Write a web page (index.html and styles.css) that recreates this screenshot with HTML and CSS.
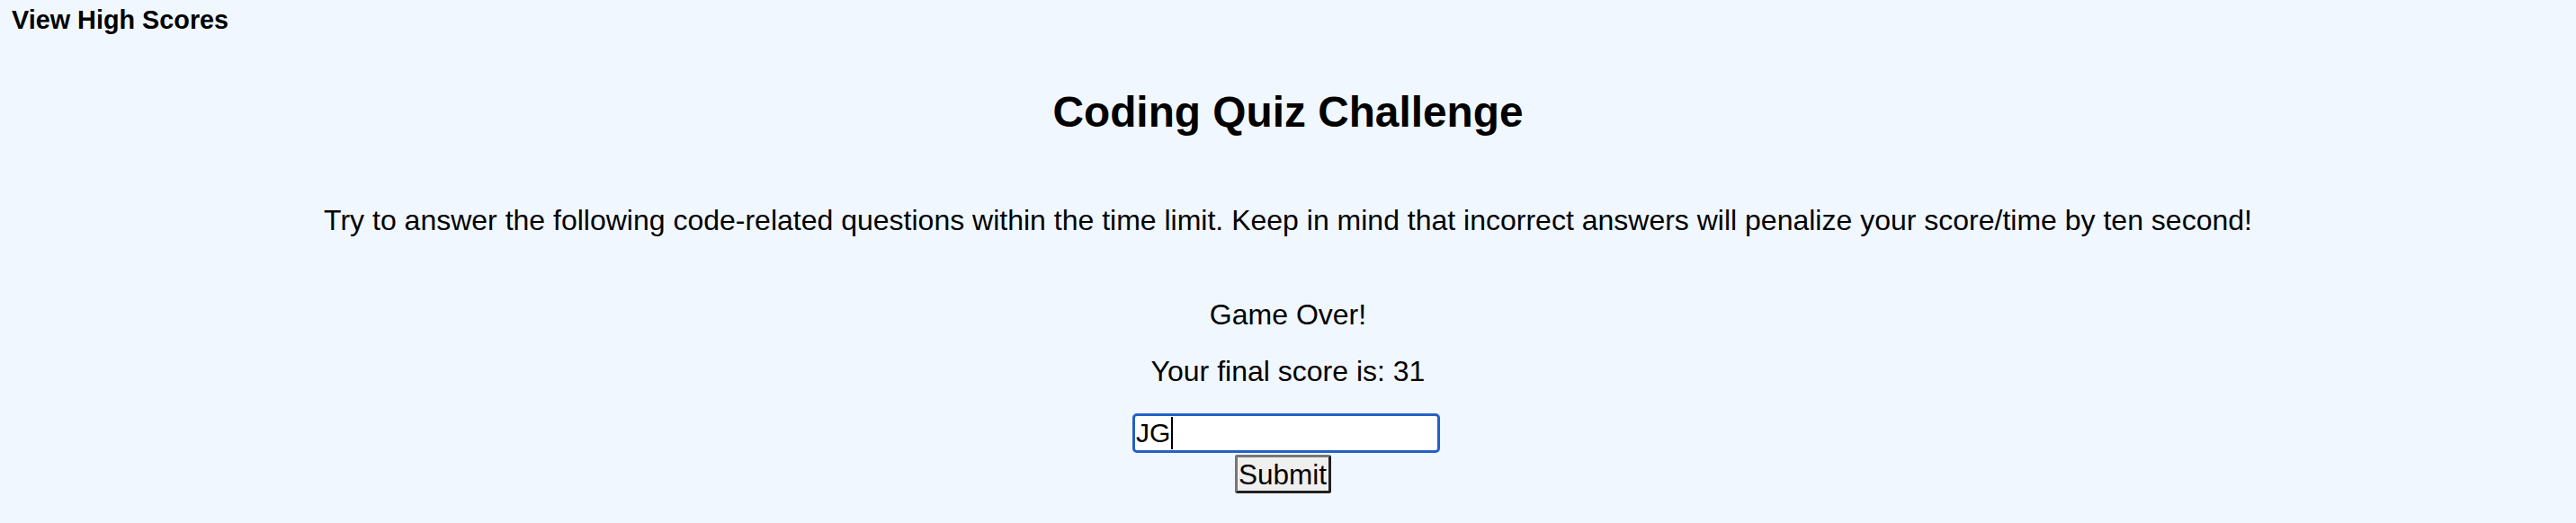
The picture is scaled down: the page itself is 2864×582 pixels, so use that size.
FILE: index.html
```html
<!DOCTYPE html>
<html lang="en">
<head>
<meta charset="utf-8">
<title>Coding Quiz Challenge</title>
<link rel="stylesheet" href="styles.css">
</head>
<body>
<header class="top-bar">
  <a class="scores-link" href="#">View High Scores</a>
</header>
<main class="quiz">
  <h2 class="quiz-title">Coding Quiz Challenge</h2>
  <p class="quiz-intro">Try to answer the following code-related questions within the time limit. Keep in mind that incorrect answers will penalize your score/time by ten second!</p>
  <p class="game-over">Game Over!</p>
  <p class="final-score">Your final score is: 31</p>
  <form class="score-form">
    <span class="field">
      <input class="initials" type="text" value="JG">
      <span class="caret"></span>
    </span>
    <button class="submit-btn" type="button">Submit</button>
  </form>
</main>
</body>
</html>
```

FILE: styles.css
```css
html, body {
  margin: 0;
  padding: 0;
}

body {
  background: #f0f7ff;
  color: #000;
  font-family: "Liberation Sans", Arial, Helvetica, sans-serif;
  width: 2864px;
  height: 582px;
  overflow: hidden;
}

.top-bar {
  padding: 6px 0 0 13px;
  height: 33px;
}

.scores-link {
  font-size: 28.8px;
  line-height: 33px;
  font-weight: bold;
  color: #000;
  text-decoration: none;
}

.quiz {
  display: flex;
  flex-direction: column;
  align-items: center;
  text-align: center;
}

.quiz-title {
  margin: 58px 0 0;
  font-size: 47.8px;
  line-height: 56px;
  font-weight: bold;
}

.quiz-intro,
.game-over,
.final-score {
  font-size: 32px;
  line-height: 36px;
  margin: 0;
}

.quiz-intro {
  margin-top: 74px;
}

.game-over {
  margin-top: 69px;
}

.final-score {
  margin-top: 27px;
}

.score-form {
  margin-top: 29px;
  display: flex;
  flex-direction: column;
  align-items: center;
}

.field {
  position: relative;
  display: block;
  margin-right: 4px;
}

.initials {
  display: block;
  box-sizing: border-box;
  width: 342px;
  height: 44px;
  margin: 0;
  padding: 0 1px 0 1px;
  border: 3px solid #2460c8;
  border-radius: 5px;
  background: #fff;
  font-family: "Liberation Sans", Arial, Helvetica, sans-serif;
  font-size: 30px;
  color: #000;
  outline: none;
}

.caret {
  position: absolute;
  left: 43px;
  top: 4px;
  width: 2px;
  height: 36px;
  background: #000;
}

.submit-btn {
  box-sizing: border-box;
  margin: 2px 12px 0 0;
  width: 107px;
  height: 43px;
  padding: 0;
  background: #efefef;
  color: #000;
  font-family: "Liberation Sans", Arial, Helvetica, sans-serif;
  font-size: 31.5px;
  line-height: 36px;
  border-style: solid;
  border-width: 3px;
  border-color: #767676 #222 #222 #767676;
  border-radius: 3px;
}
```
